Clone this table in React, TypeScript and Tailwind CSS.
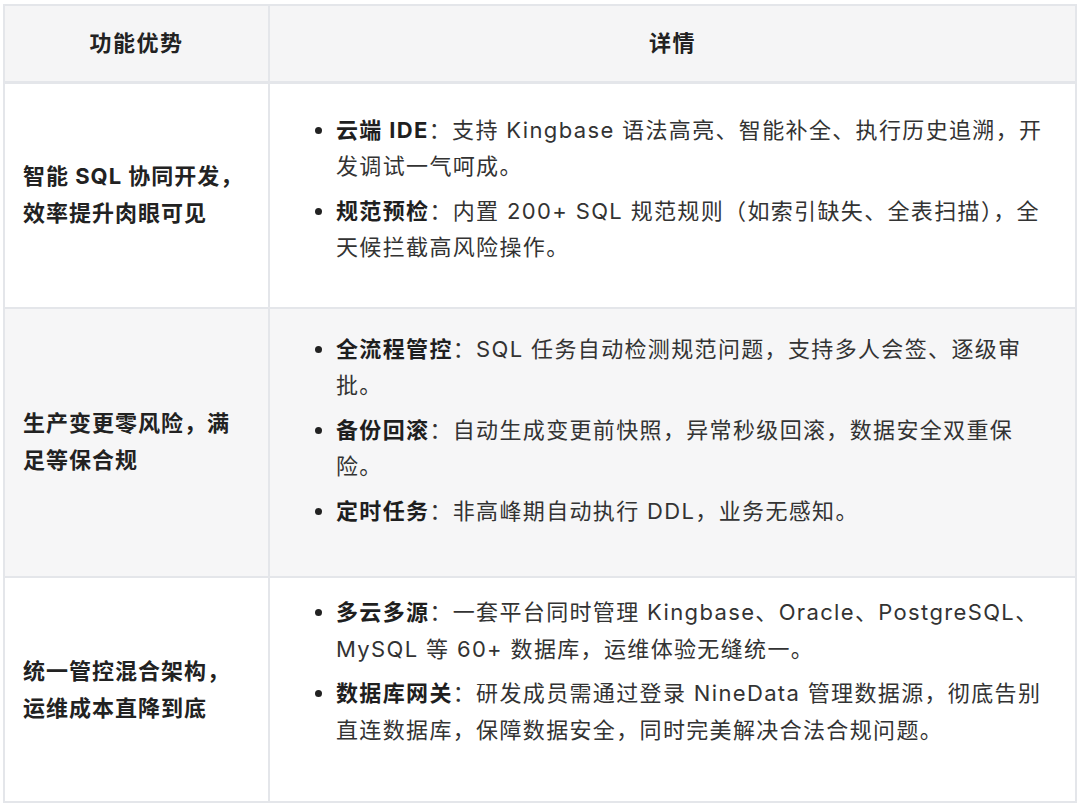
import React from "react";

type Item = { label: string; lines: string[] };
type Row = { title: string[]; items: Item[]; striped?: boolean; pad: string };

const rows: Row[] = [
  {
    title: ["智能 SQL 协同开发，", "效率提升肉眼可见"],
    pad: "pt-[28px] pb-[31px]",
    items: [
      { label: "云端 IDE", lines: ["：支持 Kingbase 语法高亮、智能补全、执行历史追溯，开", "发调试一气呵成。"] },
      { label: "规范预检", lines: ["：内置 200+ SQL 规范规则（如索引缺失、全表扫描），全", "天候拦截高风险操作。"] },
    ],
  },
  {
    title: ["生产变更零风险，满", "足等保合规"],
    striped: true,
    pad: "pt-[22px] pb-[37px]",
    items: [
      { label: "全流程管控", lines: ["：SQL 任务自动检测规范问题，支持多人会签、逐级审", "批。"] },
      { label: "备份回滚", lines: ["：自动生成变更前快照，异常秒级回滚，数据安全双重保", "险。"] },
      { label: "定时任务", lines: ["：非高峰期自动执行 DDL，业务无感知。"] },
    ],
  },
  {
    title: ["统一管控混合架构，", "运维成本直降到底"],
    pad: "pt-[16px] pb-[43px]",
    items: [
      { label: "多云多源", lines: ["：一套平台同时管理 Kingbase、Oracle、PostgreSQL、", "MySQL 等 60+ 数据库，运维体验无缝统一。"] },
      { label: "数据库网关", lines: ["：研发成员需通过登录 NineData 管理数据源，彻底告别", "直连数据库，保障数据安全，同时完美解决合法合规问题。"] },
    ],
  },
];

export default function App() {
  return (
    <div
      className="w-[1080px] h-[806px] bg-white pl-[3px] pr-[3px] pt-[4px] text-[#333333]"
      style={{ fontFamily: 'Inter, "Noto Sans CJK SC", "Noto Sans", sans-serif' }}
    >
      <table className="w-[1074px] border-collapse table-fixed text-[22px]">
        <colgroup>
          <col className="w-[265px]" />
          <col />
        </colgroup>
        <thead>
          <tr className="bg-[#f5f5f6]">
            <th className="h-[77px] border-2 border-[#e4e6ea] border-b-[3px] font-semibold text-center align-middle tracking-[1.5px] text-[#222]">
              功能优势
            </th>
            <th className="border-2 border-[#e4e6ea] border-b-[3px] font-semibold text-center align-middle tracking-[1.5px] text-[#222]">
              详情
            </th>
          </tr>
        </thead>
        <tbody>
          {rows.map((r, i) => (
            <tr key={i} className={r.striped ? "bg-[#f6f6f7]" : "bg-white"}>
              <td className="border-2 border-[#e4e6ea] pl-[18px] pr-[10px] align-middle font-bold leading-[37px] tracking-[1px] text-[#222]">
                {r.title.map((t, k) => (
                  <div key={k} className="whitespace-nowrap">{t}</div>
                ))}
              </td>
              <td className={`border-2 border-[#e4e6ea] px-[20px] align-middle ${r.pad}`}>
                <ul className="list-disc pl-[46px] mb-[10px] leading-[36.5px] tracking-[1.35px] marker:text-[#222]">
                  {r.items.map((it, k) => (
                    <li key={k} className={k > 0 ? "mt-[8px]" : ""}>
                      {it.lines.map((l, m) => (
                        <div key={m} className="whitespace-nowrap">
                          {m === 0 && <span className="font-bold text-[#1f1f1f]">{it.label}</span>}
                          {l}
                        </div>
                      ))}
                    </li>
                  ))}
                </ul>
              </td>
            </tr>
          ))}
        </tbody>
      </table>
    </div>
  );
}
